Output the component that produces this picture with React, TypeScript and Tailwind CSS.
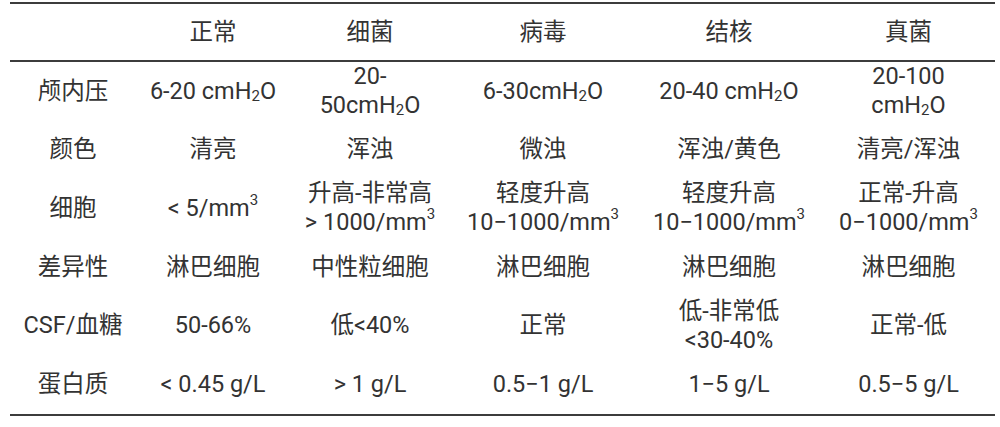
const cols = ['', '正常', '细菌', '病毒', '结核', '真菌'];

const Sub2 = () => <sub className="text-[15px] align-baseline relative top-[2px]">2</sub>;
const Sup3 = () => <sup className="text-[15px] align-baseline relative top-[-11px]">3</sup>;

const rows: React.ReactNode[][] = [
  [
    '颅内压',
    <>6-20 cmH<Sub2 />O</>,
    <>20-<br />50cmH<Sub2 />O</>,
    <>6-30cmH<Sub2 />O</>,
    <>20-40 cmH<Sub2 />O</>,
    <>20-100<br />cmH<Sub2 />O</>,
  ],
  ['颜色', '清亮', '浑浊', '微浊', '浑浊/黄色', '清亮/浑浊'],
  [
    '细胞',
    <>&lt; 5/mm<Sup3 /></>,
    <>升高-非常高<br />&gt; 1000/mm<Sup3 /></>,
    <>轻度升高<br />10−1000/mm<Sup3 /></>,
    <>轻度升高<br />10−1000/mm<Sup3 /></>,
    <>正常-升高<br />0−1000/mm<Sup3 /></>,
  ],
  ['差异性', '淋巴细胞', '中性粒细胞', '淋巴细胞', '淋巴细胞', '淋巴细胞'],
  ['CSF/血糖', '50-66%', '低<40%', '正常', <>低-非常低<br />&lt;30-40%</>, '正常-低'],
  ['蛋白质', '< 0.45 g/L', '> 1 g/L', '0.5−1 g/L', '1−5 g/L', '0.5−5 g/L'],
];

const grid = 'grid grid-cols-[126px_154px_160px_186px_186px_173px]';

export default function App() {
  return (
    <div className="w-[1000px] h-[427px] bg-white pt-[2px] pl-[10px] font-['Roboto','Noto_Sans_CJK_SC',sans-serif] text-[23.5px] text-[#333333]">
      <div className="w-[985px] border-t-[2px] border-[#3c3c3c]">
        <div className={`${grid} h-[58px] border-b-[2px] border-[#3c3c3c] items-center`}>
          {cols.map((c, i) => (
            <div key={i} className="text-center leading-[28px]">{c}</div>
          ))}
        </div>
        {rows.map((r, ri) => (
          <div key={ri} className={`${grid} h-[58.6px] items-center`}>
            {r.map((cell, ci) => (
              <div key={ci} className="text-center leading-[29px] whitespace-nowrap">{cell}</div>
            ))}
          </div>
        ))}
        <div className="border-t-[2px] border-[#3c3c3c]" />
      </div>
    </div>
  );
}
